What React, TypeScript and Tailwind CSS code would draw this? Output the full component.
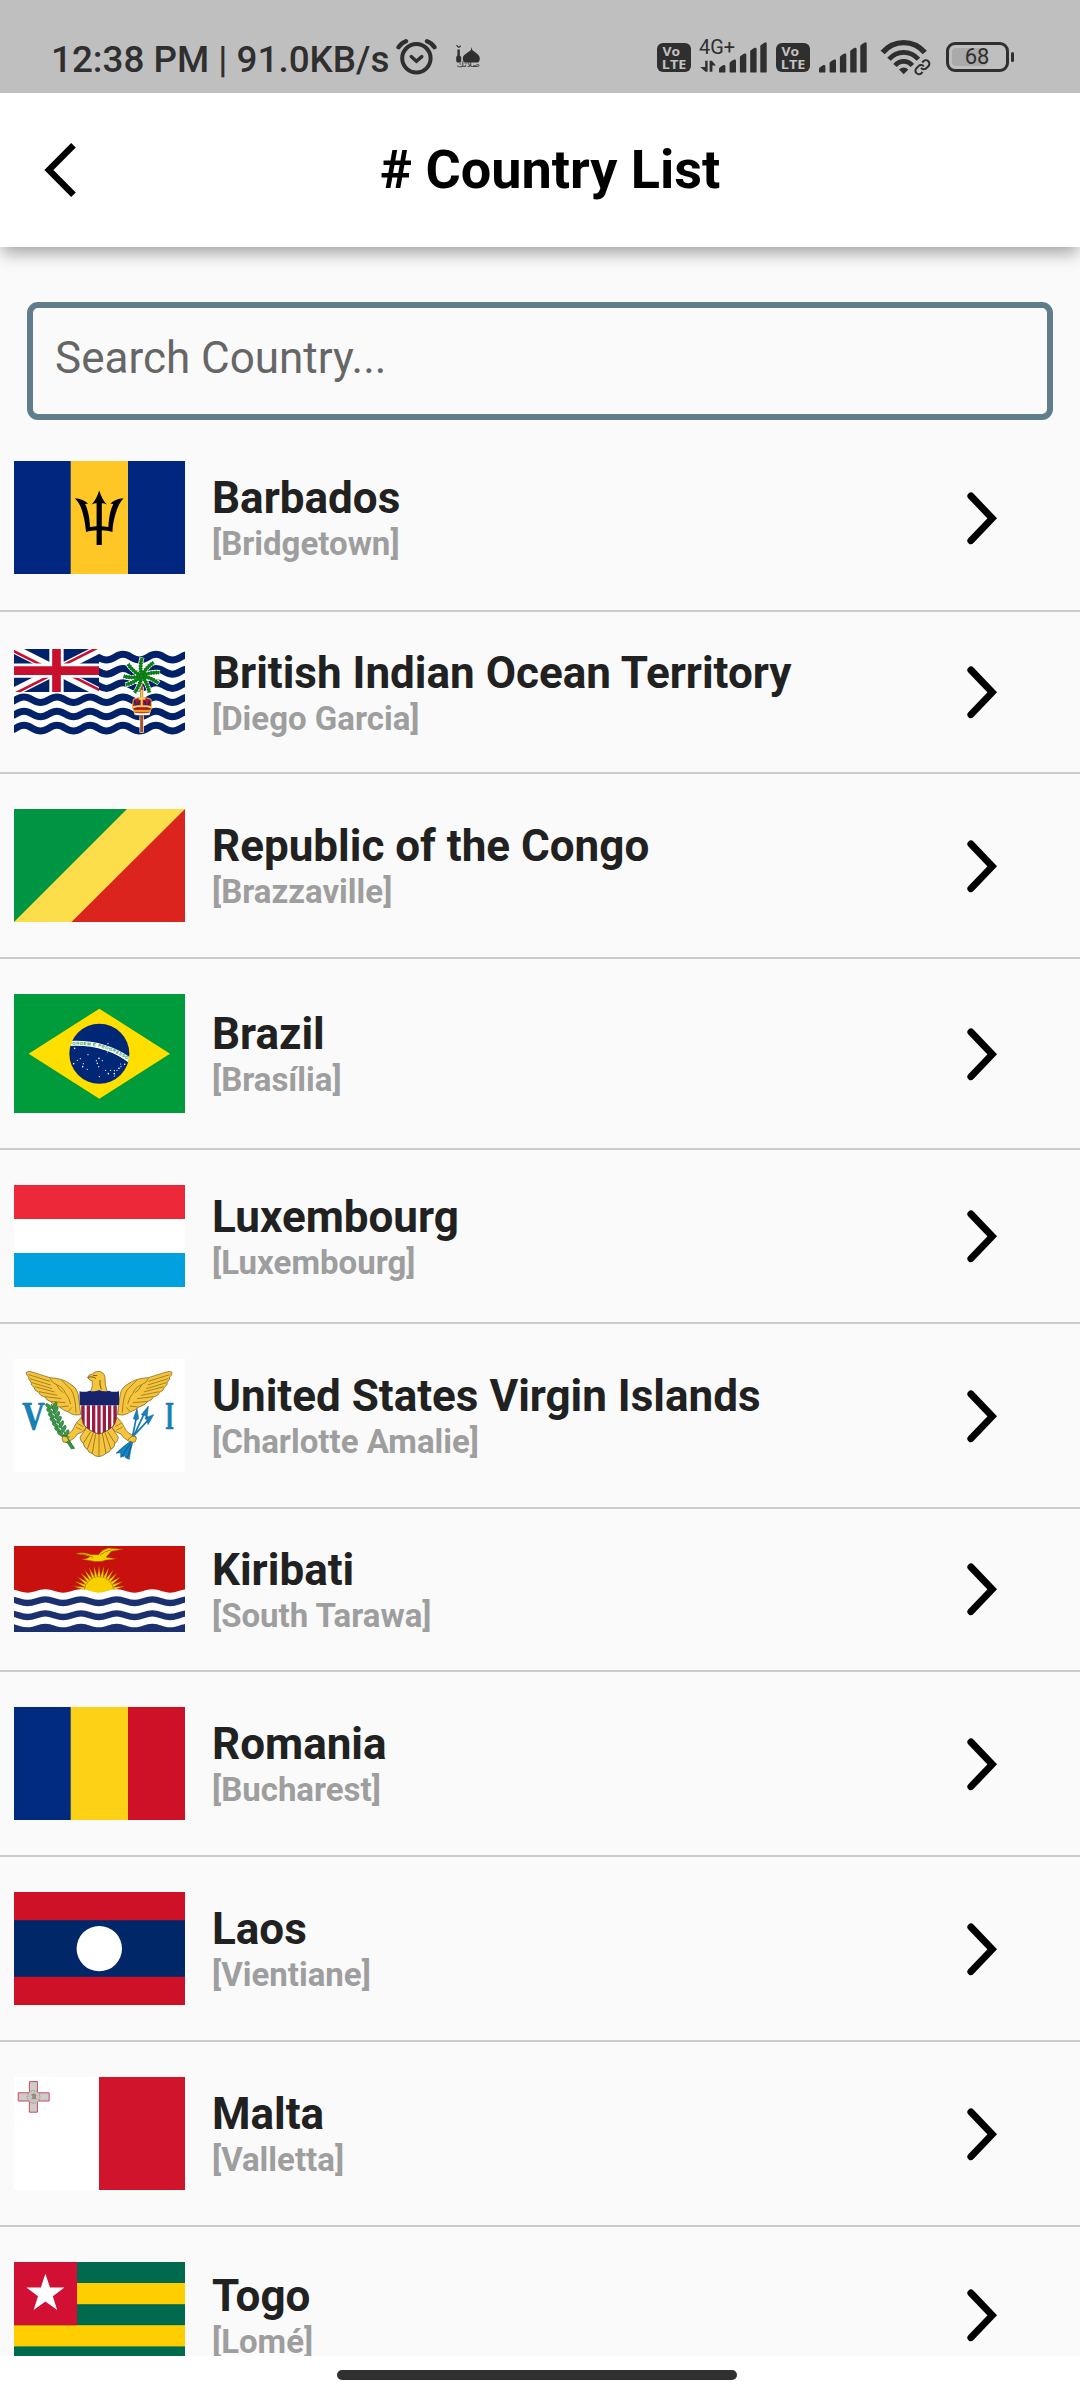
import React from "react";

type Country = {
  name: string;
  capital: string;
  row: string;
  flag: React.ReactNode;
};

/* ---------- geometry helpers ---------- */

/** Smooth wave centre line that starts on a crest. */
function wave(x0: number, y: number, period: number, amp: number, count: number) {
  const h = period / 2;
  let d = `M${x0} ${y}`;
  for (let i = 0; i < count; i++) {
    d += ` c${h * 0.4} 0 ${h * 0.6} ${amp} ${h} ${amp} s${h * 0.6} ${-amp} ${h} ${-amp}`;
  }
  return d;
}

function polar(cx: number, cy: number, r: number, deg: number) {
  const a = (deg * Math.PI) / 180;
  return `${(cx + r * Math.cos(a)).toFixed(1)},${(cy + r * Math.sin(a)).toFixed(1)}`;
}

/* ---------- flags ---------- */

const Barbados = () => (
  <svg className="block h-[113px] w-[171px]" viewBox="0 0 171 113">
    <rect width="171" height="113" fill="#00267f" />
    <rect x="56.7" width="57.3" height="113" fill="#ffc726" />
    <path d="M85.2 29.5 C83.5 35 81 40 77.6 43.6 C79.4 42.6 81 42.2 82.6 42.2 V65.2 L76 66 C75.7 58 74.4 49.5 71.2 43.2 C72.4 42.6 73.3 42.6 74.4 43 C71.5 39.8 66.5 37.6 60.8 37.2 C64.5 41 66.5 44.5 68 49.5 C70 56 71.4 63 72 71 C75.5 69.9 79 69.4 82.6 69.3 V84 H87.8 V69.3 C91.4 69.4 94.9 69.9 98.4 71 C98.6 63 100.4 56 102.6 49.5 C104.4 44.5 106 41 109.6 37.2 C103.9 37.6 99 39.8 96 43 C97.1 42.6 98 42.6 99.2 43.2 C96 49.5 94.7 58 94.4 66 L87.8 65.2 V42.2 C89.4 42.2 91 42.6 92.8 43.6 C89.4 40 86.9 35 85.2 29.5 Z" fill="#000" />
  </svg>
);

const IndianOcean = () => (
  <svg className="block h-[86px] w-[171px]" viewBox="42 87 513 258">
    <rect x="42" y="87" width="513" height="258" fill="#fff" />
    {[0, 1, 2, 3, 4, 5].map((i) => (
      <path key={i} d={wave(-27, 103 + i * 42.6, 99, 17, 6)} fill="none" stroke="#012169" strokeWidth="21" />
    ))}
    <svg x="42" y="87" width="255" height="129" viewBox="0 0 255 129">
      <rect width="255" height="129" fill="#012169" />
      <path d="M0 0 L255 129 M255 0 L0 129" stroke="#fff" strokeWidth="27" />
      <path d="M-2 6 L127 71 M257 123 L128 58" stroke="#c8102e" strokeWidth="8" />
      <path d="M253 -5 L127 59 M2 134 L128 70" stroke="#c8102e" strokeWidth="8" />
      <path d="M127.5 0 V129 M0 65 H255" stroke="#fff" strokeWidth="43" />
      <path d="M127.5 0 V129 M0 65 H255" stroke="#c8102e" strokeWidth="26" />
    </svg>
    <path d="M425 200 V338" stroke="#fff" strokeWidth="13" />
    <path d="M425 180 V336" stroke="#a5512b" strokeWidth="9" />
    {[-92, -52, -14, 20, 62, 110, 148, 176, 218].map((a, i) => (
      <g key={i} transform={`translate(425 168) rotate(${a})`}>
        <path d="M0 0 Q28 -6 56 3" stroke="#fff" strokeWidth="15" fill="none" />
      </g>
    ))}
    {[-92, -52, -14, 20, 62, 110, 148, 176, 218].map((a, i) => (
      <g key={i} transform={`translate(425 168) rotate(${a})`}>
        <path d="M0 0 Q28 -6 54 3" stroke="#118a1c" strokeWidth="9" fill="none" />
        <path d="M4 -1 Q28 -5 54 3" stroke="#0a7414" strokeWidth="12" strokeDasharray="4 4" fill="none" />
      </g>
    ))}
    <path d="M400 238 Q426 226 453 238 L455 262 L449 280 H404 L397 262 Z" fill="#b8122b" stroke="#e8bd5a" strokeWidth="3" />
    <path d="M403 242 L412 262 L418 243 M433 243 L441 262 L451 242" stroke="#1c2b6b" strokeWidth="5" fill="none" />
    <path d="M425 210 V262 M416 236 H436 M398 262 Q426 254 455 262" stroke="#f5cf55" strokeWidth="6" fill="none" />
    <path d="M402 273 H451" stroke="#e6a51e" strokeWidth="7" />
    <path d="M403 281 Q426 286 450 281" stroke="#fff" strokeWidth="5" fill="none" />
    <path d="M404 286 Q426 291 449 286" stroke="#6b4a2a" strokeWidth="2" fill="none" />
  </svg>
);

const Congo = () => (
  <svg className="block h-[113px] w-[171px]" viewBox="0 0 171 113">
    <rect width="171" height="113" fill="#fbde4a" />
    <path d="M0 0 H113 L0 113 Z" fill="#009543" />
    <path d="M171 0 V113 H57.5 Z" fill="#dc241f" />
  </svg>
);

const stars = [
  [224, 265], [264, 284], [232, 301], [221, 311], [241, 296], [250, 311], [248, 320], [262, 328],
  [289, 302], [297, 295], [307, 302], [296, 320], [292, 310], [298, 350], [317, 331], [325, 341],
  [332, 331], [343, 332], [343, 341], [343, 348], [351, 331], [357, 325], [362, 312], [363, 320],
  [374, 313], [322, 276], [324, 251],
];

const Brazil = () => (
  <svg className="block h-[119px] w-[171px]" viewBox="42 102 513 357">
    <rect x="42" y="102" width="513" height="357" fill="#009c3b" />
    <path d="M86 281 L298 146 L510 281 L298 416 Z" fill="#ffdf00" />
    <circle cx="298" cy="281" r="90" fill="#002776" />
    <clipPath id="globe">
      <circle cx="298" cy="281" r="90" />
    </clipPath>
    <g clipPath="url(#globe)">
      <path d="M200 251 Q315 242 396 306" fill="none" stroke="#fff" strokeWidth="15" />
      <path id="motto" d="M217 255 Q315 249 392 306" fill="none" />
      <text fontFamily="Liberation Sans" fontWeight="700" fontSize="13" fill="#189a4a">
        <textPath href="#motto" textLength="174">ORDEM E PROGRESSO</textPath>
      </text>
    </g>
    {stars.map(([x, y], i) => (
      <circle key={i} cx={x} cy={y} r={i % 3 === 0 ? 2.4 : 1.8} fill="#fff" />
    ))}
  </svg>
);

const Luxembourg = () => (
  <svg className="block h-[102px] w-[171px]" viewBox="0 0 171 102">
    <rect width="171" height="102" fill="#fff" />
    <rect width="171" height="34" fill="#ed2939" />
    <rect y="68" width="171" height="34" fill="#00a1de" />
  </svg>
);

const Wing = () => (
  <g>
    <path
      d="M79 127 Q84 122 96 126 L150 143 Q188 145 208 160 Q230 172 234 190 Q238 215 242 254 L226 255 Q212 252 205 246 Q190 242 180 232 Q160 226 152 215 Q138 210 135 201 Q118 197 116 187 Q103 182 102 172 Q92 166 93 156 Q84 148 86 141 Q78 136 79 127 Z"
      fill="#f4c53d" stroke="#6f5514" strokeWidth="2"
    />
    <path
      d="M86 134 L150 154 M90 146 L152 165 M96 158 L156 176 M104 170 L164 186 M117 185 L172 196 M135 200 L184 206 M152 214 L196 218 M180 231 L206 228 M204 245 L216 232 M150 145 Q156 160 170 164 Q190 172 196 190 Q206 198 212 222 M184 150 Q204 170 214 180 Q226 200 228 248 M170 164 Q176 180 190 188"
      fill="none" stroke="#8b6a18" strokeWidth="2.2"
    />
  </g>
);

const VirginIslands = () => (
  <svg className="block h-[113px] w-[171px]" viewBox="42 87 513 339">
    <rect x="42" y="87" width="513" height="339" fill="#fff" />
    <Wing />
    <g transform="translate(595 0) scale(-1 1)">
      <Wing />
    </g>
    {/* legs */}
    <path d="M244 262 Q228 276 222 292 Q214 312 190 317 Q182 326 190 336 Q204 342 214 330 Q228 322 232 312 Q250 308 258 294 Z" fill="#f4c53d" stroke="#6f5514" strokeWidth="2" />
    <path d="M351 262 Q367 276 373 292 Q381 312 405 317 Q413 326 405 336 Q391 342 381 330 Q367 322 363 312 Q345 308 337 294 Z" fill="#f4c53d" stroke="#6f5514" strokeWidth="2" />
    <path d="M232 280 L250 290 M228 292 L246 300 M363 280 L345 290 M367 292 L349 300" stroke="#8b6a18" strokeWidth="2" />
    {/* tail */}
    <path d="M260 292 L240 322 Q242 336 250 340 Q252 354 262 358 Q266 370 276 370 Q284 380 297 380 Q310 378 318 370 Q328 368 332 358 Q344 354 345 340 Q354 334 355 322 L335 292 Z" fill="#f4c53d" stroke="#6f5514" strokeWidth="2" />
    <path d="M272 305 L250 340 M280 308 L262 358 M287 310 L277 370 M297 312 V378 M307 310 L318 370 M315 308 L333 358 M323 305 L345 340" stroke="#6f5514" strokeWidth="2" />
    {/* head */}
    <path d="M270 185 Q280 172 276 152 Q265 150 263 142 Q266 133 277 132 Q284 123 297 124 Q312 126 315 142 Q314 164 322 186 Z" fill="#f4c53d" stroke="#6f5514" strokeWidth="2" />
    <path d="M263 143 Q270 138 282 142 L288 146 M279 136 L292 137 M300 150 Q298 166 304 178" stroke="#5a4510" strokeWidth="2.5" fill="none" />
    {/* shield */}
    <clipPath id="shield">
      <path d="M238 184 Q256 188 268 182 Q284 186 297 180 Q311 186 327 182 Q339 188 357 184 V226 L350 228 Q352 262 344 282 Q328 304 297 312 Q266 304 250 282 Q243 262 245 228 L238 226 Z" />
    </clipPath>
    <g clipPath="url(#shield)">
      <rect x="236" y="178" width="124" height="136" fill="#fff" />
      {[0, 1, 2, 3, 4, 5, 6].map((i) => (
        <rect key={i} x={244 + i * 16} y="226" width="10" height="90" fill="#9b1b42" />
      ))}
      <rect x="236" y="178" width="124" height="48" fill="#17246b" />
    </g>
    <path d="M245 228 Q243 262 250 282 Q266 304 297 312 Q328 304 344 282 Q352 262 350 228" fill="none" stroke="#4a1a33" strokeWidth="2" />
    {/* olive branch */}
    <path d="M154 222 Q168 270 196 312 L222 356" stroke="#2f8a3c" strokeWidth="4" fill="none" />
    <path d="M206 332 L224 355 L214 357 L200 336 Z" fill="#2f9a44" stroke="#1d5c28" strokeWidth="1.5" />
    {[
      [154, 226], [157, 240], [162, 254], [167, 268], [174, 282], [181, 296], [190, 309],
    ].map(([x, y], i) => (
      <g key={i} fill="#3c9a4a" stroke="#1f6b2c" strokeWidth="1.5">
        <ellipse cx={x - 8} cy={y + 3} rx="11" ry="5" transform={`rotate(38 ${x - 8} ${y + 3})`} />
        <ellipse cx={x + 10} cy={y + 1} rx="12" ry="5" transform={`rotate(-62 ${x + 10} ${y + 1})`} />
      </g>
    ))}
    {/* arrows */}
    <path d="M409 262 L398 318 M434 248 L402 316 M452 262 L404 314" stroke="#1679b8" strokeWidth="5" />
    <path d="M411 236 L400 266 L410 270 L416 266 Z M445 228 L424 254 L434 256 L441 264 Z M461 254 L434 264 L442 272 L444 284 Z" fill="#1683c4" stroke="#0d4a75" strokeWidth="1.5" />
    <path d="M392 334 Q372 346 348 370 L362 368 L362 382 L374 378 L378 384 L388 388 Q390 364 398 338 Z" fill="#1683c4" stroke="#0d4a75" strokeWidth="1.5" />
    <path d="M390 342 L366 378 M394 344 L382 384" stroke="#0d4a75" strokeWidth="2" />
    <path d="M188 318 Q198 312 210 322 M384 330 Q396 312 410 322" stroke="#6f5514" strokeWidth="2" fill="none" />
    <text x="67" y="296" fontFamily="Liberation Serif" fontWeight="700" fontSize="121" textLength="68" lengthAdjust="spacingAndGlyphs" fill="#1683b8" stroke="#1a7099" strokeWidth="2">V</text>
    <text x="496" y="296" fontFamily="Liberation Serif" fontWeight="700" fontSize="121" textLength="26" lengthAdjust="spacingAndGlyphs" fill="#1683b8" stroke="#1a7099" strokeWidth="2">I</text>
  </svg>
);

const rays = Array.from({ length: 17 }, (_, i) => -180 + 2 + i * 11);

const Kiribati = () => (
  <svg className="block h-[86px] w-[171px]" viewBox="42 648 513 258">
    <rect x="42" y="648" width="513" height="258" fill="#c8100f" />
    {rays.map((a, i) => (
      <polygon
        key={i}
        points={`${polar(297, 786, 44, a - 6)} ${polar(297, 786, 78, a)} ${polar(297, 786, 44, a + 6)}`}
        fill="#f8d000" stroke="#8a5b00" strokeWidth="1"
      />
    ))}
    <circle cx="297" cy="784" r="44" fill="#f8d000" stroke="#9c7a00" strokeWidth="1.5" />
    <path
      d="M227 671 Q250 664 274 674 L296 674 Q306 658 326 654 Q346 656 370 658 Q344 662 334 664 Q326 674 318 682 L348 686 Q330 690 318 690 Q300 698 272 692 Q258 690 246 688 Q262 686 270 680 Q252 672 227 671 Z"
      fill="#f8d000" stroke="#8a5b00" strokeWidth="1.5"
    />
    <path d="M244 671 Q262 674 280 682 M300 676 Q312 664 334 660" stroke="#8a5b00" strokeWidth="2" fill="none" />
    <path d={`${wave(-78, 778, 107, 10, 7)} V906 H-78 Z`} fill="#fff" />
    <path d={wave(-78, 808, 107, 11, 7)} fill="none" stroke="#1b306f" strokeWidth="19" />
    <path d={wave(-78, 850, 107, 11, 7)} fill="none" stroke="#1b306f" strokeWidth="19" />
    <path d={`${wave(-78, 881, 107, 11, 7)} V906 H-78 Z`} fill="#1b306f" />
  </svg>
);

const Romania = () => (
  <svg className="block h-[113px] w-[171px]" viewBox="0 0 171 113">
    <rect width="57" height="113" fill="#002b7f" />
    <rect x="56.7" width="57.3" height="113" fill="#fcd116" />
    <rect x="114" width="57" height="113" fill="#ce1126" />
  </svg>
);

const Laos = () => (
  <svg className="block h-[113px] w-[171px]" viewBox="0 0 171 113">
    <rect width="171" height="113" fill="#ce1126" />
    <rect y="28.2" width="171" height="56.6" fill="#002868" />
    <circle cx="85.3" cy="56.6" r="22.7" fill="#fff" />
  </svg>
);

const Malta = () => (
  <svg className="block h-[113px] w-[171px]" viewBox="0 0 171 113">
    <rect width="171" height="113" fill="#fff" />
    <rect x="85" width="86" height="113" fill="#cf142b" />
    <path d="M15.4 4.6 H23.4 V15.8 H35.2 V24 H23.4 V35.2 H15.4 V24 H4.2 V15.8 H15.4 Z" fill="#ccc" stroke="#d0485a" strokeWidth="1" />
    <circle cx="19.6" cy="19.9" r="6.3" fill="#c8c5c3" stroke="#8a8080" strokeWidth="1" strokeDasharray="1.2 1.2" />
    <path d="M17 17.5 L20 16.2 L22.4 18 L21.8 20 L22.6 22.6 L19.8 22 L17.2 22.6 L18.6 20 Z" fill="#9a8a82" />
  </svg>
);

const starPoints = Array.from({ length: 10 }, (_, i) => polar(31.4, 31.8, i % 2 ? 7.8 : 20, -90 + i * 36)).join(" ");

const Togo = () => (
  <svg className="block h-[106px] w-[171px]" viewBox="0 0 171 106">
    <rect width="171" height="106" fill="#006a4e" />
    <rect y="21" width="171" height="21.2" fill="#ffce00" />
    <rect y="63.2" width="171" height="21.2" fill="#ffce00" />
    <rect width="63" height="63.2" fill="#d21034" />
    <polygon points={starPoints} fill="#fff" />
  </svg>
);

const countries: Country[] = [
  { name: "Barbados", capital: "Bridgetown", row: "h-[187px]", flag: <Barbados /> },
  { name: "British Indian Ocean Territory", capital: "Diego Garcia", row: "h-[162px]", flag: <IndianOcean /> },
  { name: "Republic of the Congo", capital: "Brazzaville", row: "h-[185px]", flag: <Congo /> },
  { name: "Brazil", capital: "Brasília", row: "h-[191px]", flag: <Brazil /> },
  { name: "Luxembourg", capital: "Luxembourg", row: "h-[174px]", flag: <Luxembourg /> },
  { name: "United States Virgin Islands", capital: "Charlotte Amalie", row: "h-[185px]", flag: <VirginIslands /> },
  { name: "Kiribati", capital: "South Tarawa", row: "h-[163px] pb-px", flag: <Kiribati /> },
  { name: "Romania", capital: "Bucharest", row: "h-[185px]", flag: <Romania /> },
  { name: "Laos", capital: "Vientiane", row: "h-[185px]", flag: <Laos /> },
  { name: "Malta", capital: "Valletta", row: "h-[185px]", flag: <Malta /> },
  { name: "Togo", capital: "Lomé", row: "h-[178px]", flag: <Togo /> },
];

/* ---------- status bar icons (all 40px tall, starting at y=36) ---------- */

const Alarm = () => (
  <svg className="h-10 w-[42px] shrink-0" viewBox="395 36 42 40" fill="none" stroke="#2f2f2f">
    <circle cx="416.4" cy="58.3" r="14.2" strokeWidth="4" />
    <path d="M398.6 47.2 Q401 43 406 41.2 M434.4 47.2 Q432 43 427 41.2" strokeWidth="4.4" strokeLinecap="round" />
    <path d="M411.2 56.6 L416.4 61.2 L421.8 56.6" strokeWidth="3.4" strokeLinecap="round" />
  </svg>
);

const Mosque = () => (
  <svg className="ml-[17px] h-10 w-7 shrink-0" viewBox="454 36 28 40" fill="#2f2f2f">
    <path d="M471.6 47 L472.3 50 C475 52.5 479.8 54.5 479.8 58.5 C479.8 60.5 479 62 478 62.6 H464.4 C463.2 61.5 462.8 60 462.8 58.5 C462.8 54.5 468.5 52.5 470.9 50 Z" />
    <path d="M457.4 49.5 H459.8 V55.5 L461.2 57 V61 L460.4 62.6 H457 L456.2 61 V57 L457.4 55.5 Z" />
    <path d="M456.6 45 Q458.6 49 460.6 45.6" fill="none" stroke="#2f2f2f" strokeWidth="1.1" />
    <text x="456.4" y="67" fontFamily="DejaVu Sans" fontSize="7.5" textLength="23.6" lengthAdjust="spacingAndGlyphs">صلاتك</text>
  </svg>
);

const VoLte = () => (
  <svg className="h-10 w-[34px] shrink-0" viewBox="657 36 34 40" fontFamily="Open Sans" fontWeight="700" fill="#c2c2c2">
    <rect x="657" y="43" width="34" height="29" rx="6" fill="#2f2f2f" />
    <text x="662.4" y="56" fontSize="12.8" textLength="17.6" lengthAdjust="spacingAndGlyphs">Vo</text>
    <text x="661.8" y="68.8" fontSize="13" textLength="24.6" lengthAdjust="spacingAndGlyphs">LTE</text>
  </svg>
);

const barTops = [65, 59.5, 53.6, 47.8, 42.4];
const barLefts = [0, 10.6, 20.9, 31.2, 41.3];

const Signal = () => (
  <svg className="h-10 w-12 shrink-0" viewBox="0 36 48 40" fill="#2f2f2f">
    {barTops.map((t, i) => (
      <path
        key={i}
        d={`M${barLefts[i]} ${t + 3.4} Q${barLefts[i] + 0.4} ${t + 2.4} ${barLefts[i] + 4.6} ${t} Q${barLefts[i] + 6.4} ${t - 0.4} ${barLefts[i] + 6.4} ${t + 1.4} V71.4 Q${barLefts[i] + 6.4} 72.6 ${barLefts[i] + 5.4} 72.6 H${barLefts[i] + 1} Q${barLefts[i]} 72.6 ${barLefts[i]} 71.4 Z`}
      />
    ))}
  </svg>
);

const DataNetwork = () => (
  <svg className="ml-[8px] h-10 w-[37px] shrink-0" viewBox="699 36 37 40" fill="#2f2f2f">
    <text x="699" y="53.8" fontFamily="Roboto" fontSize="19.5" textLength="36" lengthAdjust="spacingAndGlyphs">4G+</text>
    <path d="M705.2 60.8 H707.6 V71.8 H705.6 L700.2 67 H705.2 Z" />
    <path d="M709.6 60.8 H711.8 L716 65.6 H712.4 V71.8 H709.6 Z" />
  </svg>
);

const Wifi = () => (
  <svg className="h-10 w-[52px] shrink-0" viewBox="880 36 52 40" fill="none" stroke="#2f2f2f">
    <path d="M882.6 52.6 Q891 42.6 903.7 42.6 Q916.4 42.6 924.8 52.6" strokeWidth="5.4" />
    <path d="M889 59.2 Q895 52.3 903.7 52.3 Q912.4 52.3 918.4 59.2" strokeWidth="4.8" />
    <path d="M895 65.6 Q898.6 61.4 903.7 61.4 Q908.8 61.4 912.4 65.6" strokeWidth="4.6" />
    <path d="M899 69.6 Q903.7 65.6 908.4 69.6 L903.7 74.2 Z" fill="#2f2f2f" stroke="none" />
    <g transform="translate(914 58.8) scale(0.7)">
      <g stroke="#bfbfbf" strokeWidth="7">
        <path d="M10 13a5 5 0 0 0 7.54.54l3-3a5 5 0 0 0-7.07-7.07l-1.72 1.71" />
        <path d="M14 11a5 5 0 0 0-7.54-.54l-3 3a5 5 0 0 0 7.07 7.07l1.71-1.71" />
      </g>
      <g strokeWidth="2.9">
        <path d="M10 13a5 5 0 0 0 7.54.54l3-3a5 5 0 0 0-7.07-7.07l-1.72 1.71" />
        <path d="M14 11a5 5 0 0 0-7.54-.54l-3 3a5 5 0 0 0 7.07 7.07l1.71-1.71" />
      </g>
    </g>
  </svg>
);

const Battery = () => (
  <div className="ml-[14px] mt-[2px] flex shrink-0 items-center gap-[2px]">
    <div className="relative flex h-[30px] w-[63px] items-center justify-center rounded-[9px] border-[3px] border-[#2f2f2f]">
      <div className="absolute left-[3.5px] top-[3px] h-[18px] w-[35px] rounded-[4px] bg-[#aaaaaa]" />
      <span className="relative text-[22px] leading-[24px] text-[#2f2f2f]">68</span>
    </div>
    <div className="h-[10px] w-[3.5px] rounded-[2px] bg-[#2f2f2f]" />
  </div>
);

const StatusBar = () => (
  <div className="relative z-20 flex h-[93px] shrink-0 items-start justify-between bg-[#bfbfbf] pl-[51px] pr-[66px] pt-[36px] text-[#2f2f2f]">
    <div className="flex h-10 items-center">
      <span className="h-10 w-[340px] whitespace-nowrap pt-[3px] text-[36.8px] font-medium leading-[42px]">
        12:38 PM | 91.0KB/s
      </span>
      <div className="ml-1 flex">
        <Alarm />
        <Mosque />
      </div>
    </div>
    <div className="flex h-10 items-center">
      <VoLte />
      <DataNetwork />
      <div className="-ml-[17px]">
        <Signal />
      </div>
      <div className="ml-[9px]">
        <VoLte />
      </div>
      <div className="ml-[9px]">
        <Signal />
      </div>
      <div className="ml-[13px]">
        <Wifi />
      </div>
      <Battery />
    </div>
  </div>
);

/* ---------- page ---------- */

const Row = ({ country }: { country: Country }) => (
  <li className={`flex shrink-0 items-center border-b-2 border-[#cbcbcb] pl-[14px] pr-[80px] ${country.row}`}>
    {country.flag}
    <div className="ml-[27px] flex-1 whitespace-nowrap pt-[2px]">
      <div className="text-[44px] font-bold leading-[51.6px] text-[#212121]">{country.name}</div>
      <div className="text-[33px] font-bold leading-[38.6px] text-[#9e9e9e]">[{country.capital}]</div>
    </div>
    <svg className="h-14 w-9" viewBox="0 0 36 56" fill="none" stroke="#000" strokeWidth="7" strokeLinecap="round">
      <path d="M6.9 6 L28.2 28.3 L6.9 50.6" />
    </svg>
  </li>
);

export default function App() {
  return (
    <div className="flex h-[2400px] w-[1080px] flex-col overflow-hidden bg-white font-['Roboto',sans-serif]">
      <StatusBar />
      <header className="relative z-10 flex h-[154px] shrink-0 items-center bg-white shadow-[0_8px_16px_-2px_rgba(0,0,0,0.36)]">
        <svg className="ml-[40px] h-14 w-10" viewBox="40 142 40 56">
          <path d="M71.2 143 L75.8 147.6 L53.4 170 L75.8 192.4 L71.2 197 L44.4 170 Z" />
        </svg>
        <h1 className="ml-[300px] whitespace-nowrap text-[54px] font-bold leading-[64px] text-black">
          # Country List
        </h1>
      </header>
      <main className="flex h-[2109px] shrink-0 flex-col overflow-hidden bg-[#fafafa]">
        <div className="px-[27px] pt-[55px]">
          <input
            className="block h-[118px] w-full rounded-[11px] border-[6px] border-[#607d8b] bg-transparent pb-[7px] pl-[22px] text-[44px] outline-none placeholder:text-[#666666] placeholder:opacity-100"
            placeholder="Search Country..."
          />
        </div>
        <ul className="mt-[5px] flex flex-col">
          {countries.map((c) => (
            <Row key={c.name} country={c} />
          ))}
        </ul>
      </main>
      <footer className="flex h-[44px] shrink-0 bg-white pl-[337px] pt-[14px]">
        <div className="h-[10px] w-[400px] rounded-full bg-[#303030]" />
      </footer>
    </div>
  );
}
